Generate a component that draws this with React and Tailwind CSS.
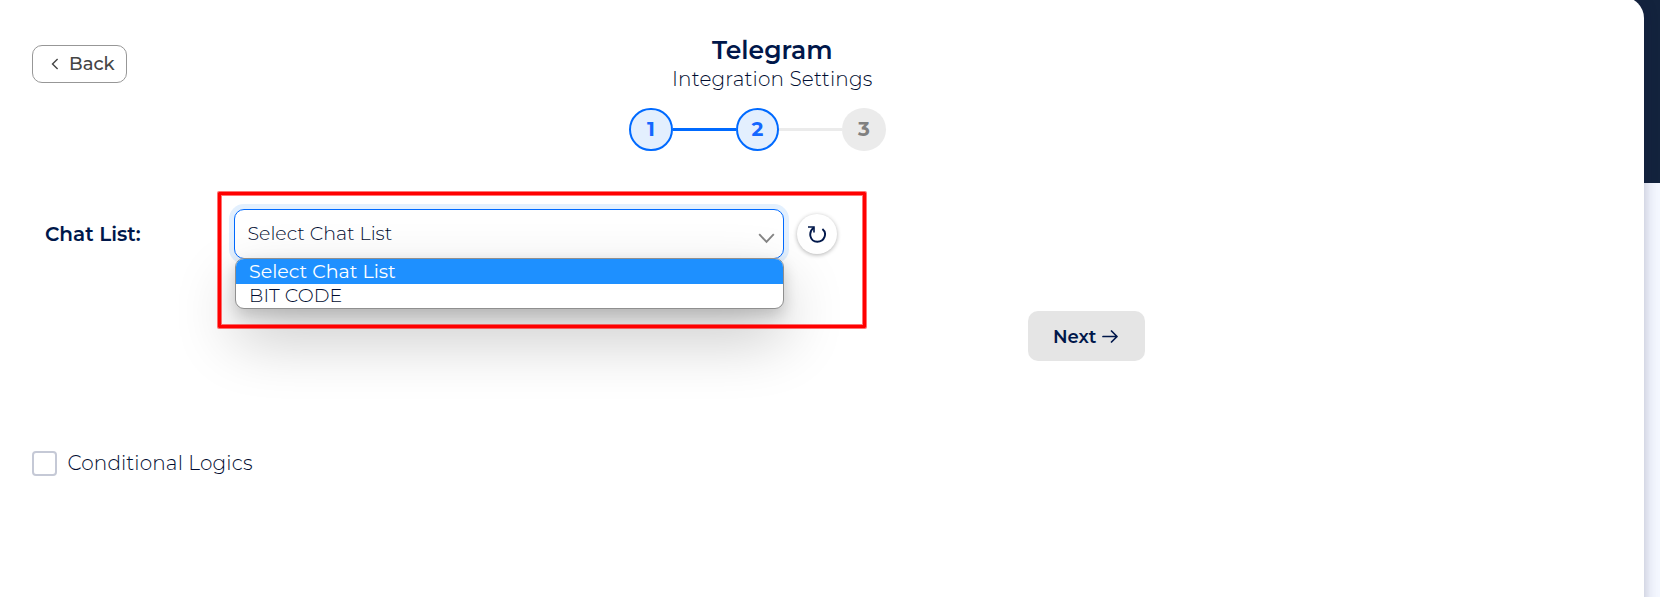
import React from "react";

function BackButton() {
  return (
    <button className="mt-[45px] flex h-[38px] w-[95px] shrink-0 items-center rounded-[10px] border border-[#979797] pl-[18px] text-[18px] font-medium text-[#454545]">
      <svg width="8" height="12" viewBox="0 0 8 12" fill="none" stroke="currentColor" strokeWidth="1.4">
        <path d="M6.6 1 1.5 6l5.1 5" />
      </svg>
      <span className="ml-[10px]">Back</span>
    </button>
  );
}

function Step({ label, active, wide }) {
  return (
    <div
      className={
        (active
          ? "flex h-[43px] shrink-0 items-center justify-center rounded-full border-2 border-[#006aff] bg-[#e3effe] pb-px text-[20px] leading-none font-bold text-[#1467ff]"
          : "flex h-[43px] shrink-0 items-center justify-center rounded-full bg-[#ebebeb] pb-px text-[20px] leading-none font-bold text-[#808080]") +
        (wide ? " w-[44px]" : " w-[43px]")
      }
    >
      {label}
    </div>
  );
}

function Steps() {
  return (
    <div className="flex items-center">
      <Step label="1" active wide />
      <div className="h-[3px] w-[63px] bg-[#006aff]" />
      <Step label="2" active />
      <div className="h-[3px] w-[63px] bg-[#ebebeb]" />
      <Step label="3" wide />
    </div>
  );
}

function ChatSelect() {
  return (
    <div className="relative h-[50px] w-[550px] shrink-0">
      <div className="flex h-[50px] items-center justify-between rounded-[10px] border border-[#006aff] bg-white pr-[8px] pl-[12.5px] text-[19px] font-light text-[#000c30] shadow-[0_0_0_5px_#e3f0fe]">
        <span>Select Chat List</span>
        <svg className="mt-[8px]" width="17" height="11" viewBox="0 0 17 11" fill="none" stroke="#858585" strokeWidth="1.9">
          <path d="m1.2 1.2 7.3 7.7 7.3-7.7" />
        </svg>
      </div>
      <div className="absolute top-[49px] left-px h-[51px] w-[549px] overflow-hidden rounded-[9px] border border-[#8f8f8f] bg-white text-[19px] leading-[25px] shadow-[0_28px_62px_rgba(0,0,0,0.24),0_6px_15px_rgba(0,0,0,0.18)]">
        <div className="h-[25px] bg-[#1e90ff] pl-[13px] font-normal text-white">Select Chat List</div>
        <div className="h-[24px] pl-[13px] leading-[24px] font-light tracking-[0.1px] text-[#000c30]">BIT CODE</div>
      </div>
    </div>
  );
}

export default function App() {
  return (
    <div className="flex h-[597px] w-[1660px] overflow-hidden bg-[linear-gradient(#13233d_0_183px,#f4f7ff_183px)] font-['Montserrat','Inter',sans-serif] text-[#00174a]">
      <main className="-mt-[3px] h-[640px] w-[1644px] shrink-0 rounded-tr-[21px] bg-white pt-[3px] shadow-[0_0_14px_rgba(20,20,70,0.28)]">
        <header className="flex h-[192px] pl-[32px]">
          <BackButton />
          <div className="ml-[502px] w-[285px] pt-[34px]">
            <h1 className="pl-[83px] text-[25px] leading-[32px] font-semibold tracking-[0.05px] whitespace-nowrap">Telegram</h1>
            <p className="pl-[43px] text-[20px] leading-[26px] font-light tracking-[0.17px] whitespace-nowrap text-[#000c30]">Integration Settings</p>
            <div className="mt-[16px]">
              <Steps />
            </div>
          </div>
        </header>

        <section className="relative flex h-[119px] pt-[17px] pl-[45px]">
          <div className="h-[50px] w-[189px] shrink-0 text-[20px] leading-[50px] font-semibold">Chat List:</div>
          <ChatSelect />
          <button className="mt-[5px] ml-[13px] flex size-10 items-center justify-center rounded-full bg-white shadow-[0_1px_4px_rgba(0,0,0,0.3)]">
            <svg width="18" height="17" viewBox="0 0 18 17" fill="none" stroke="currentColor">
              <path d="M5.8 1.4C-.2 6.2 1.8 15.7 9.3 15.7c7.4 0 10.2-8.6 5.1-12.8" strokeWidth="1.9" />
              <path d="M0 1h6v5.6" strokeWidth="1.6" />
            </svg>
          </button>
          <div className="pointer-events-none absolute top-0 left-[218px] h-[136px] w-[648px] rounded-[1px] border-[3px] border-[#ff0000] shadow-[0_0_0_1px_rgba(255,0,0,0.55),inset_0_0_0_1px_rgba(255,0,0,0.55)]" />
        </section>

        <div className="flex h-[50px] pl-[1028px]">
          <button className="flex h-[50px] w-[117px] items-center rounded-[10px] bg-[#e5e5e5] pl-[25px] text-[18px] font-semibold">
            <span className="pt-[2px]">Next</span>
            <svg className="ml-[6px]" width="16" height="14" viewBox="0 0 16 14" fill="none" stroke="currentColor" strokeWidth="1.7" strokeLinecap="round" strokeLinejoin="round">
              <path d="M1 7.5h14M9.5 2 15 7.5 9.5 13" />
            </svg>
          </button>
        </div>

        <label className="mt-[90px] flex h-[25px] items-center pl-[32px]">
          <span className="size-[25px] rounded-[4px] border-2 border-[#c5c9d6] bg-white" />
          <span className="ml-[10.5px] text-[20px] leading-[25px] font-light tracking-[0.15px] text-[#000c30]">Conditional Logics</span>
        </label>
      </main>
    </div>
  );
}
